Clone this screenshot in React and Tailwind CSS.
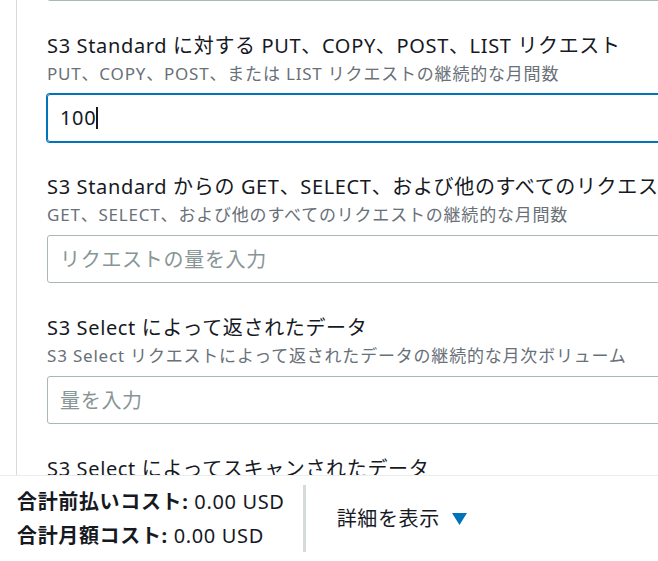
import React from 'react';

const font = { fontFamily: '"Noto Sans", "Noto Sans CJK JP", sans-serif' };

const fields = [
  {
    label: 'S3 Standard に対する PUT、COPY、POST、LIST リクエスト',
    desc: 'PUT、COPY、POST、または LIST リクエストの継続的な月間数',
    value: '100',
    focused: true,
  },
  {
    label: 'S3 Standard からの GET、SELECT、および他のすべてのリクエスト',
    desc: 'GET、SELECT、および他のすべてのリクエストの継続的な月間数',
    placeholder: 'リクエストの量を入力',
  },
  {
    label: 'S3 Select によって返されたデータ',
    desc: 'S3 Select リクエストによって返されたデータの継続的な月次ボリューム',
    placeholder: '量を入力',
  },
  {
    label: 'S3 Select によってスキャンされたデータ',
    desc: 'S3 Select リクエストによってスキャンされたデータの継続的な月次ボリューム',
    placeholder: '量を入力',
  },
];

const Field = ({ field }) => (
  <div className="mt-[31px] shrink-0">
    <div className="whitespace-nowrap text-[20px] leading-[28px] tracking-[0.65px] text-[#16191f]">{field.label}</div>
    <div className="whitespace-nowrap text-[17px] leading-[28px] tracking-[0.8px] text-[#687078]">{field.desc}</div>
    {field.focused ? (
      <div className="mt-[6px] flex h-[48px] w-[640px] items-center rounded-[3px] border border-[#0073bb] pl-[12px] text-[20px] tracking-[0.65px] text-[#16191f] ring-1 ring-[#0073bb]">
        <span>{field.value}</span>
        <span className="h-[22px] w-[2px] bg-[#16191f]" />
      </div>
    ) : (
      <input
        className="mt-[6px] block h-[48px] w-[640px] rounded-[3px] border border-[#aab7b8] bg-white pl-[12px] text-[20px] tracking-[0.7px] text-[#16191f] outline-none placeholder:text-[#879596]"
        placeholder={field.placeholder}
        style={font}
      />
    )}
  </div>
);

export default function App() {
  return (
    <div className="flex h-[561px] w-[658px] flex-col overflow-hidden bg-white" style={font}>
      <div className="min-h-0 flex-1 overflow-hidden pl-[16px]">
        <div className="flex h-full flex-col border-l border-[#d5dbdb] pl-[30px]">
          {/* tail of the field above */}
          <div className="-mt-[47px] h-[48px] w-[640px] shrink-0 rounded-[3px] border border-[#aab7b8]" />
          {fields.map((f) => (
            <Field key={f.label} field={f} />
          ))}
        </div>
      </div>

      <div className="flex h-[86px] shrink-0 items-center border-t border-[#eaeded] bg-white">
        <div className="pl-[17px] pr-[18px] text-[20px] leading-[34px] tracking-[0.65px] text-[#16191f]">
          <div className="whitespace-nowrap">
            <span className="font-bold">合計前払いコスト:</span> 0.00 USD
          </div>
          <div className="whitespace-nowrap">
            <span className="font-bold">合計月額コスト:</span> 0.00 USD
          </div>
        </div>
        <div className="h-[67px] w-[3px] shrink-0 bg-[#d5dbdb]" />
        <button className="ml-[31px] flex items-center gap-[12px] text-[20px] tracking-[0.65px] text-[#16191f]" style={font}>
          <span>詳細を表示</span>
          <svg width="15" height="12" viewBox="0 0 15 12">
            <path d="M0 0 H15 L7.5 12 Z" fill="#0073bb" />
          </svg>
        </button>
      </div>
    </div>
  );
}
